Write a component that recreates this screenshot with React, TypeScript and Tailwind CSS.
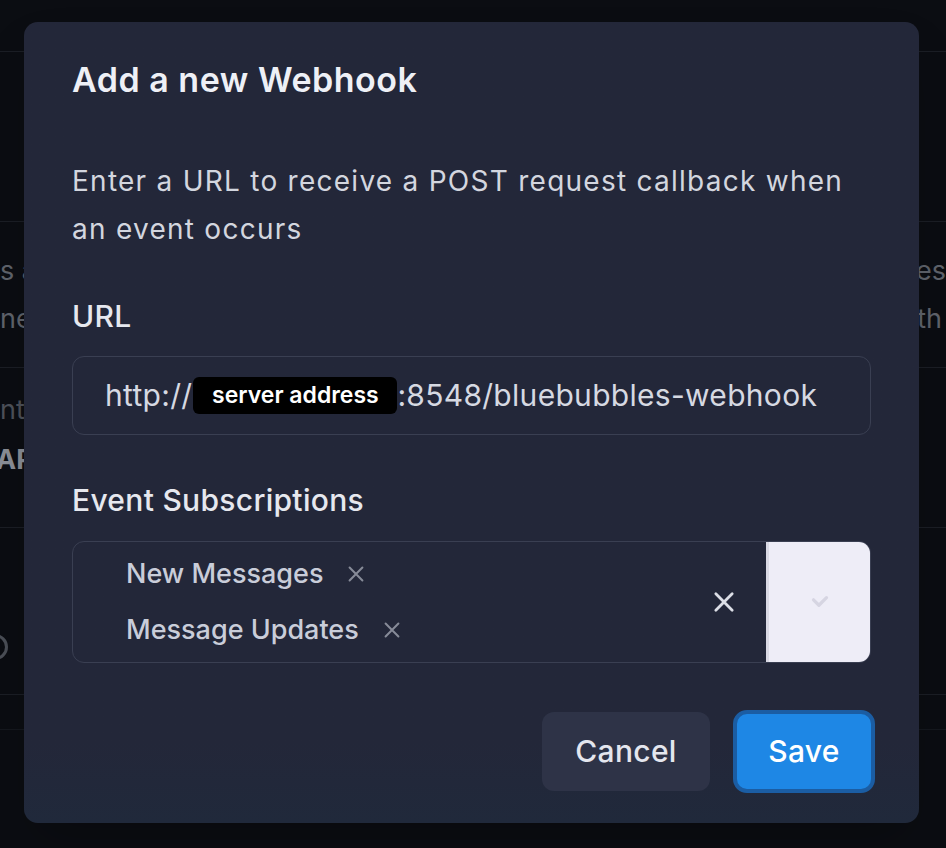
import React from "react";

const font = { fontFamily: "Inter, 'Noto Sans', sans-serif" };

const XIcon = ({ className }: { className?: string }) => (
  <svg viewBox="0 0 24 24" fill="none" stroke="currentColor" strokeLinecap="round" className={className}>
    <path d="M5 5l14 14M19 5L5 19" />
  </svg>
);

const BackgroundPage = () => (
  <div className="flex h-[848px] w-full flex-col bg-[#0b0d12] text-[27px] text-[#5f636b]">
    <div className="h-[52px] shrink-0 border-b border-[#1b1e25]" />
    <div className="h-[170px] shrink-0 border-b border-[#1b1e25]" />
    <div className="flex h-[146px] shrink-0 flex-col justify-center border-b border-[#1b1e25] leading-[48px]">
      <div className="flex justify-between">
        <span>s a</span>
        <span>es</span>
      </div>
      <div className="flex justify-between">
        <span>ne</span>
        <span className="pr-[4px]">th</span>
      </div>
    </div>
    <div className="flex h-[160px] shrink-0 flex-col border-b border-[#1b1e25] pt-[17px] leading-[50px]">
      <span className="text-[#4d5159]">nt</span>
      <span className="-ml-[4px] font-bold text-[#8a8e96]">AP</span>
    </div>
    <div className="flex h-[167px] shrink-0 items-end border-b border-[#1b1e25] pb-[34px]">
      <div className="-ml-[18px] h-[26px] w-[26px] rounded-full border-[3px] border-[#4a4e56]" />
    </div>
    <div className="h-[35px] shrink-0 border-b border-[#15181e]" />
  </div>
);

const Tag = ({ label }: { label: string }) => (
  <div className="flex items-center gap-[22px] leading-[40px]">
    <span className="text-[27px] font-medium text-[#c9cdd9]">{label}</span>
    <XIcon className="h-[22px] w-[22px] stroke-[2.2] text-[#878b98]" />
  </div>
);

export default function App() {
  return (
    <div className="relative h-[848px] w-[946px] overflow-hidden" style={font}>
      <BackgroundPage />
      <div className="absolute inset-0 pl-[24px] pt-[22px]">
        <div className="flex h-[801px] w-[895px] flex-col rounded-[14px] bg-gradient-to-b from-[#232739] via-[#232739] via-90% to-[#20293b] px-[48px] pt-[38px] shadow-2xl">
          <h2 className="text-[34px] font-semibold leading-[40px] tracking-[0.015em] text-[#eef0f6]">Add a new Webhook</h2>
          <p className="mt-[57px] text-[28px] leading-[48px] tracking-[0.045em] text-[#d3d6df]">
            Enter a URL to receive a POST request callback when an event occurs
          </p>
          <div className="mt-[43px] text-[30px] font-medium leading-[40px] tracking-[0.01em] text-[#e6e8ef]">URL</div>
          <div className="mt-[20px] flex h-[79px] items-center rounded-[12px] border-[1.5px] border-[#3a3f52] pl-[32px] text-[30px] tracking-[0.01em] text-[#d6d9e2]">
            <span>http://</span>
            <span className="ml-[1px] flex h-[37px] w-[204px] shrink-0 items-center justify-center rounded-[6px] bg-black text-[23px] font-semibold tracking-normal text-white">
              server address
            </span>
            <span>:8548/bluebubbles-webhook</span>
          </div>
          <div className="mt-[45px] text-[30px] font-medium leading-[40px] tracking-[0.01em] text-[#e6e8ef]">Event Subscriptions</div>
          <div className="mt-[21px] flex h-[122px] rounded-[12px] border-[1.5px] border-[#3a3f52]">
            <div className="flex flex-1 flex-col gap-[16px] pl-[53px] pt-[12px]">
              <Tag label="New Messages" />
              <Tag label="Message Updates" />
            </div>
            <div className="flex items-center pr-[28px]">
              <XIcon className="h-[28px] w-[28px] stroke-[2.4] text-[#dcdee6]" />
            </div>
            <div className="flex w-[104px] items-center justify-center rounded-r-[11px] border-l-[3px] border-[#d9d9e4] bg-[#eeedf7]">
              <svg viewBox="0 0 24 24" className="h-[26px] w-[26px]" fill="none" stroke="#d6d5e2" strokeWidth="3" strokeLinecap="round" strokeLinejoin="round">
                <path d="M6 10l5 5 7-7" />
              </svg>
            </div>
          </div>
          <div className="-mr-[4px] mt-[47px] flex items-center justify-end gap-[23px]">
            <button className="h-[79px] w-[168px] rounded-[12px] bg-[#2e3347] text-[30px] font-medium tracking-[0.01em] text-[#e4e6ee]">
              Cancel
            </button>
            <button className="h-[83px] w-[142px] rounded-[14px] border-[4px] border-[#1b5da3] bg-[#1e87e5] text-[30px] font-medium tracking-[0.01em] text-white">
              Save
            </button>
          </div>
        </div>
      </div>
    </div>
  );
}
